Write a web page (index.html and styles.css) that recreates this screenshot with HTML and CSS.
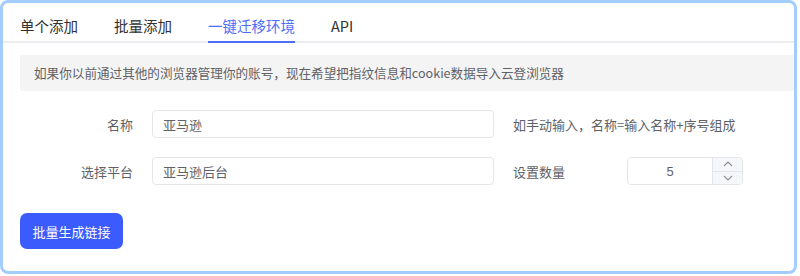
FILE: index.html
```html
<!DOCTYPE html>
<html lang="zh-CN">
<head>
  <meta charset="UTF-8" />
  <title>一键迁移环境</title>
  <link rel="stylesheet" href="styles.css">
</head>
<body>
<div class="panel">
  <div class="tabs">
    <a href="#" class="tab">单个添加</a>
    <a href="#" class="tab">批量添加</a>
    <a href="#" class="tab active">一键迁移环境</a>
    <a href="#" class="tab">API</a>
  </div>

  <div class="tip">如果你以前通过其他的浏览器管理你的账号，现在希望把指纹信息和cookie数据导入云登浏览器</div>

  <div class="form">
    <div class="row">
      <label class="label">名称</label>
      <input type="text" class="input" value="亚马逊" />
      <span class="hint">如手动输入，名称=输入名称+序号组成</span>
    </div>
    <div class="row">
      <label class="label">选择平台</label>
      <input type="text" class="input" value="亚马逊后台" />
      <span class="hint count-label">设置数量</span>
      <div class="number">
        <input type="text" class="number-value" value="5" />
        <div class="number-btns">
          <span class="step">
            <svg width="10" height="6" viewBox="0 0 10 6"><path d="M1 5 L5 1 L9 5" fill="none" stroke="#8a8f99" stroke-width="1.1"/></svg>
          </span>
          <span class="step">
            <svg width="10" height="6" viewBox="0 0 10 6"><path d="M1 1 L5 5 L9 1" fill="none" stroke="#8a8f99" stroke-width="1.1"/></svg>
          </span>
        </div>
      </div>
    </div>
  </div>

  <button class="primary-btn">批量生成链接</button>
</div>
</body>
</html>
```

FILE: styles.css
```css
body {
  margin: 0;
  background-color: #fff;
  font-family: "Noto Sans CJK SC", "Liberation Sans", sans-serif;
  color: #303133;
}

.panel {
  width: 797px;
  height: 274px;
  box-sizing: border-box;
  border: 3px solid #a3cdff;
  border-radius: 8px;
  padding: 0 0 0 17px;
}

.tabs {
  display: flex;
  gap: 36px;
  height: 38px;
  border-bottom: 2px solid #ebebf0;
  margin-left: -17px;
  padding-left: 17px;
}

.tab {
  display: block;
  height: 38px;
  line-height: 46px;
  font-size: 14.5px;
  color: #303133;
  text-decoration: none;
  box-sizing: border-box;
}

.tab.active {
  color: #4f6ef7;
  border-bottom: 2px solid #4f6ef7;
  height: 40px;
}

.tip {
  margin-top: 12px;
  height: 36px;
  line-height: 36px;
  background-color: #f4f4f5;
  padding-left: 14px;
  font-size: 12.6px;
  color: #606266;
  border-radius: 3px 0 0 3px;
}

.form {
  margin-top: 19px;
}

.row {
  display: flex;
  align-items: center;
  height: 28px;
  margin-bottom: 19px;
}

.row:last-child {
  margin-bottom: 0;
}

.label {
  width: 113px;
  text-align: right;
  margin-right: 19px;
  font-size: 13px;
  color: #606266;
}

.input {
  width: 342px;
  height: 28px;
  box-sizing: border-box;
  border: 1px solid #e4e6eb;
  border-radius: 4px;
  padding: 0 10px;
  font-family: inherit;
  font-size: 13px;
  color: #606266;
  outline: none;
}

.hint {
  margin-left: 19px;
  font-size: 13px;
  color: #606266;
}

.count-label {
  width: 114px;
}

.number {
  display: flex;
  width: 116px;
  height: 28px;
  box-sizing: border-box;
  border: 1px solid #e4e6eb;
  border-radius: 4px;
  overflow: hidden;
}

.number-value {
  flex: 1;
  width: 0;
  border: none;
  text-align: center;
  font-family: "Liberation Sans", sans-serif;
  font-size: 13px;
  color: #606266;
  outline: none;
  padding: 0;
}

.number-btns {
  width: 29px;
  display: flex;
  flex-direction: column;
  background-color: #f5f7fa;
  border-left: 1px solid #e4e6eb;
}

.step {
  flex: 1;
  display: flex;
  align-items: center;
  justify-content: center;
}

.step + .step {
  border-top: 1px solid #e4e6eb;
}

.primary-btn {
  display: block;
  margin-top: 28px;
  width: 103px;
  height: 36px;
  background-color: #3b5bfd;
  color: #fff;
  border: none;
  border-radius: 7px;
  font-family: inherit;
  font-size: 13px;
  cursor: pointer;
}
```
